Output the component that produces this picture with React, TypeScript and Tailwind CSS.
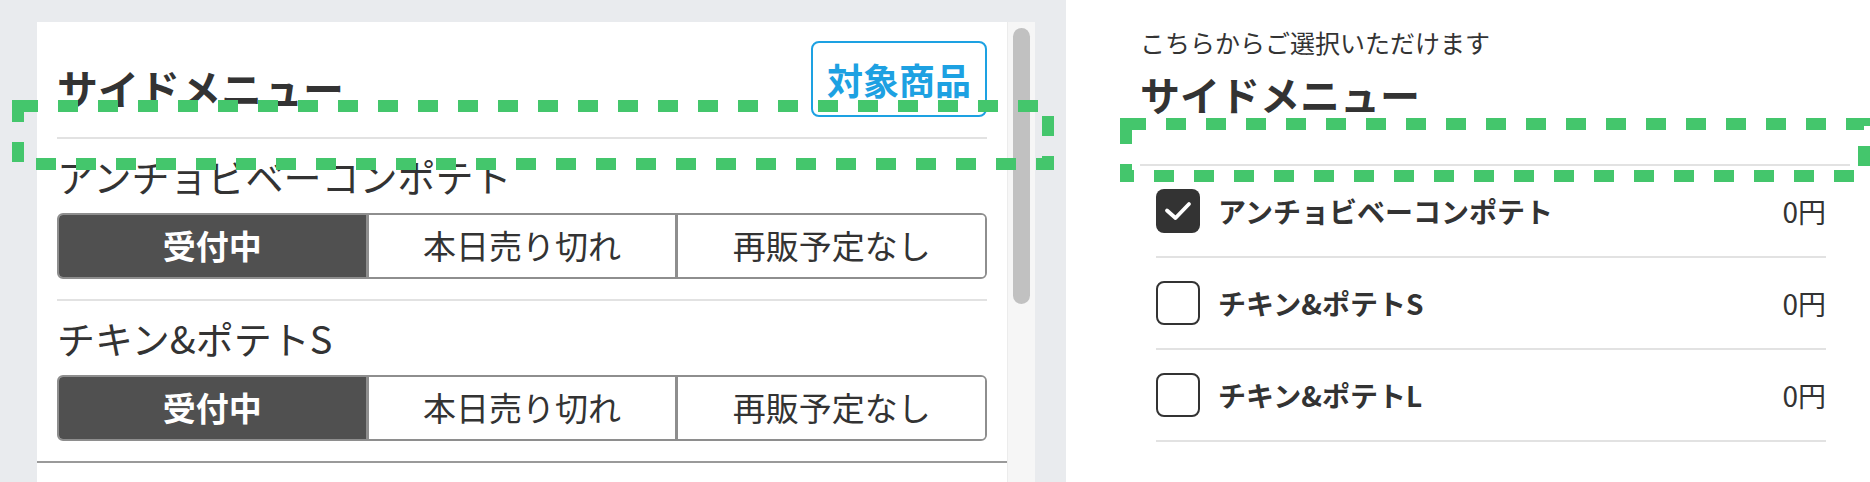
import React from 'react';

const font = { fontFamily: '"Noto Sans CJK JP", "Noto Sans", sans-serif' };

const statuses = ['受付中', '本日売り切れ', '再販予定なし'];

const items = ['アンチョビベーコンポテト', 'チキン&ポテトS'];

const options = [
  { name: 'アンチョビベーコンポテト', price: '0円', checked: true },
  { name: 'チキン&ポテトS', price: '0円', checked: false },
  { name: 'チキン&ポテトL', price: '0円', checked: false },
];

const StatusToggle: React.FC = () => (
  <div className="flex h-[66px] rounded-[6px] border-2 border-[#8e8e8e] overflow-hidden">
    {statuses.map((s, i) => (
      <div
        key={s}
        className={`flex-1 flex items-center justify-center text-[33px] ${
          i === 0 ? 'bg-[#505050] text-white font-bold' : 'bg-white text-[#333] border-l-[3px] border-[#8e8e8e]'
        }`}
      >
        {s}
      </div>
    ))}
  </div>
);

const Dashed: React.FC<{ className: string; w: number; h: number }> = ({ className, w, h }) => (
  <svg className={`absolute pointer-events-none ${className}`} width={w} height={h}>
    <rect
      x={6}
      y={6}
      width={w - 12}
      height={h - 12}
      fill="none"
      stroke="#44c66c"
      strokeWidth={12}
      strokeDasharray="20 20"
    />
  </svg>
);

export default function App() {
  return (
    <div className="relative flex h-[482px] w-[1870px] overflow-hidden text-[#333]" style={font}>
      {/* left: status editor */}
      <div className="w-[1066px] shrink-0 bg-[#e9ebee] pt-[22px] pl-[37px] pr-[31px] flex">
        <div className="flex-1 bg-white">
          <div className="px-5">
            <div className="flex justify-between items-start pt-[19px] pb-[20px]">
              <h2 className="mt-[26px] text-[41px] leading-none font-bold">サイドメニュー</h2>
              <button className="h-[76px] px-[14px] rounded-[8px] border-2 border-[#1da1e2] text-[#1da1e2] text-[36px] font-bold leading-none">
                対象商品
              </button>
            </div>
            {items.map(name => (
              <div key={name} className="border-t-2 border-[#e2e2e2] pt-[14px] pb-[20px]">
                <div className="text-[38px] leading-[45px] mb-[15px]">{name}</div>
                <StatusToggle />
              </div>
            ))}
          </div>
          <div className="border-t-2 border-[#9a9a9a]" />
        </div>
        <div className="w-[28px] bg-[#f6f6f6] border-l border-[#ececec] flex justify-center">
          <div className="mt-[6px] w-[17px] h-[276px] rounded-full bg-[#c1c1c1]" />
        </div>
      </div>

      {/* right: option picker */}
      <div className="flex-1 bg-white pl-[74px] pr-[20px] pt-[24px]">
        <p className="text-[25px] leading-[36px]">こちらからご選択いただけます</p>
        <h2 className="mt-[14px] text-[40px] leading-none font-bold">サイドメニュー</h2>
        <div className="mt-[50px] border-t-2 border-[#e2e2e2]" />
        <ul className="ml-4 mr-6">
          {options.map(o => (
            <li key={o.name} className="h-[92px] flex items-center border-b-2 border-[#e2e2e2]">
              {o.checked ? (
                <span className="w-[44px] h-[44px] rounded-[8px] bg-[#333] flex items-center justify-center">
                  <svg width="44" height="44" viewBox="0 0 44 44">
                    <path d="M11 21.5 L19.5 29 L33 15" fill="none" stroke="#fff" strokeWidth="3.8" strokeLinecap="round" strokeLinejoin="round" />
                  </svg>
                </span>
              ) : (
                <span className="w-[44px] h-[44px] rounded-[8px] border-2 border-[#333]" />
              )}
              <span className="ml-[18px] flex-1 text-[28px] font-bold">{o.name}</span>
              <span className="text-[28px]">{o.price}</span>
            </li>
          ))}
        </ul>
      </div>

      <Dashed className="left-[12px] top-[100px]" w={1042} h={70} />
      <Dashed className="left-[1120px] top-[118px]" w={750} h={64} />
    </div>
  );
}
